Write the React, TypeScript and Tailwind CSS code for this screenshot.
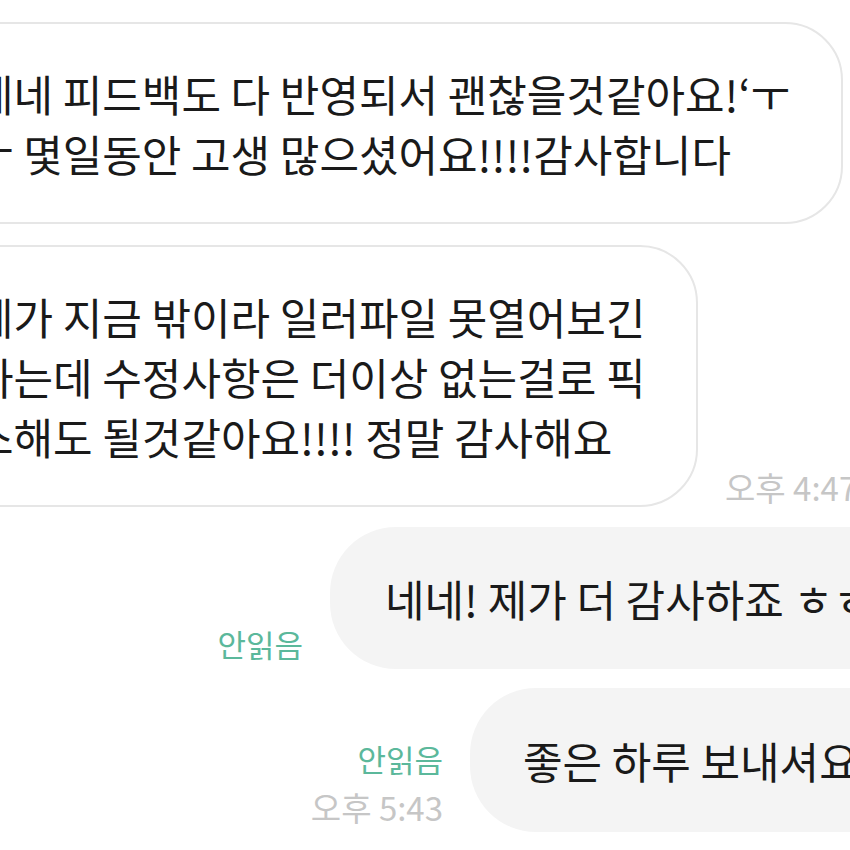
const font = {
  fontFamily: '"Noto Sans CJK KR", "Noto Sans", sans-serif',
};

function LeftBubble({ lines, width }: { lines: string[]; width: string }) {
  return (
    <div
      className={`-ml-[74px] shrink-0 rounded-[58px] border-2 border-[#e6e6e6] bg-white py-[39px] pl-[46px] ${width}`}
    >
      {lines.map((line, i) => (
        <div key={i} className="whitespace-nowrap text-[43px] leading-[60px] text-[#1a1a1a]">
          {line}
        </div>
      ))}
    </div>
  );
}

function RightRow({
  text,
  time,
  bubble,
}: {
  text: string;
  time?: string;
  bubble: string;
}) {
  return (
    <div className="-mr-[90px] flex items-end justify-end gap-[27px]">
      <div className="flex flex-col items-end pb-[1px] leading-[48px]">
        <span className="text-[31px] text-[#5bb89b]">안읽음</span>
        {time && <span className="text-[33px] text-[#c6c6c6]">{time}</span>}
      </div>
      <div className={`flex shrink-0 items-center overflow-hidden rounded-[66px] bg-[#f4f4f4] ${bubble}`}>
        <span className="whitespace-nowrap text-[43px] leading-[60px] text-[#1a1a1a]">{text}</span>
      </div>
    </div>
  );
}

export default function App() {
  return (
    <div className="h-[850px] w-[850px] overflow-hidden bg-white pt-[22px]" style={font}>
      <div className="flex flex-col">
        <LeftBubble
          width="w-[917px]"
          lines={["네네 피드백도 다 반영되서 괜찮을것같아요!‘ㅜ", "ㅜ 몇일동안 고생 많으셨어요!!!!감사합니다"]}
        />

        <div className="mt-[21px] flex items-end gap-[27px]">
          <LeftBubble
            width="w-[772px]"
            lines={[
              "제가 지금 밖이라 일러파일 못열어보긴",
              "하는데 수정사항은 더이상 없는걸로 픽",
              "스해도 될것같아요!!!! 정말 감사해요",
            ]}
          />
          <span className="-mb-[4px] whitespace-nowrap text-[33px] leading-[48px] text-[#c6c6c6]">
            오후 4:47
          </span>
        </div>

        <div className="mt-[20px]">
          <RightRow text="네네! 제가 더 감사하죠 ㅎㅎ" bubble="h-[142px] w-[610px] pl-[55px]" />
        </div>
        <div className="mt-[19px]">
          <RightRow text="좋은 하루 보내셔요" time="오후 5:43" bubble="h-[144px] w-[470px] pl-[53px]" />
        </div>
      </div>
    </div>
  );
}
